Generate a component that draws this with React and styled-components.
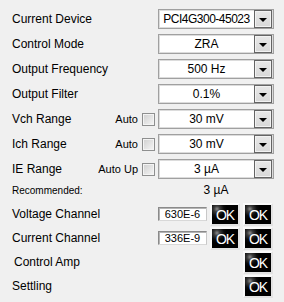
import React from "react";
import styled, { createGlobalStyle } from "styled-components";

const settings = [
  { label: "Current Device", value: "PCI4G300-45023", tight: true },
  { label: "Control Mode", value: "ZRA" },
  { label: "Output Frequency", value: "500 Hz" },
  { label: "Output Filter", value: "0.1%" },
  { label: "Vch Range", value: "30 mV", auto: "Auto" },
  { label: "Ich Range", value: "30 mV", auto: "Auto" },
  { label: "IE Range", value: "3 µA", auto: "Auto Up" },
];

const status = [
  { label: "Voltage Channel", reading: "630E-6", buttons: 2 },
  { label: "Current Channel", reading: "336E-9", buttons: 2 },
  { label: "Control Amp", buttons: 1, indent: true },
  { label: "Settling", buttons: 1 },
];

function DropArrow() {
  return (
    <svg width="8" height="4" viewBox="0 0 8 4">
      <polygon points="0,0 8,0 4,4" fill="#000" />
    </svg>
  );
}

function App() {
  return (
    <>
      <GlobalStyle />
      <Panel>
        <SettingsList>
          {settings.map((s) => (
            <Row key={s.label}>
              <Label>{s.label}</Label>
              {s.auto && (
                <AutoGroup>
                  {s.auto}
                  <Checkbox />
                </AutoGroup>
              )}
              <Select>
                <SelectValue tight={s.tight}>{s.value}</SelectValue>
                <ArrowButton>
                  <DropArrow />
                </ArrowButton>
              </Select>
            </Row>
          ))}
        </SettingsList>

        <RecommendedRow>
          <SmallLabel>Recommended:</SmallLabel>
          <Recommended>3 µA</Recommended>
        </RecommendedRow>

        <StatusList>
          {status.map((s) => (
            <StatusRow key={s.label}>
              <Label indent={s.indent}>{s.label}</Label>
              {s.reading && <Reading>{s.reading}</Reading>}
              <OkGroup>
                {Array.from({ length: s.buttons }).map((_, i) => (
                  <OkButton key={i}>OK</OkButton>
                ))}
              </OkGroup>
            </StatusRow>
          ))}
        </StatusList>
      </Panel>
    </>
  );
}

export default App;

const GlobalStyle = createGlobalStyle`
  body {
    margin: 0;
    background: #f0f0f0;
    font-family: "Liberation Sans", Arial, sans-serif;
    color: #000;
  }
`;

const Panel = styled.div`
  width: 284px;
  height: 302px;
  box-sizing: border-box;
  padding: 9px 10px 0 12px;
  display: flex;
  flex-direction: column;
`;

const SettingsList = styled.div`
  display: flex;
  flex-direction: column;
  gap: 5px;
`;

const Row = styled.div`
  display: flex;
  align-items: center;
  height: 20px;
`;

const Label = styled.div`
  flex: 1;
  font-size: 12px;
  white-space: nowrap;
  padding-left: ${(p) => (p.indent ? "2px" : "0")};
`;

const AutoGroup = styled.div`
  display: flex;
  align-items: center;
  gap: 4px;
  margin-right: 3px;
  font-size: 11px;
`;

const Checkbox = styled.span`
  width: 13px;
  height: 13px;
  box-sizing: border-box;
  border: 1px solid #8e8f8f;
  box-shadow: inset 0 0 0 1px #f4f4f4;
  background: linear-gradient(135deg, #cfcfcf, #f6f6f6);
  margin-top: 1px;
`;

const Select = styled.div`
  width: 116px;
  height: 20px;
  box-sizing: border-box;
  border: 1px solid #a0a0a0;
  box-shadow: inset 0 0 0 1px #dcdcdc;
  background: #fff;
  display: flex;
  align-items: center;
  padding-right: 1px;
`;

const SelectValue = styled.div`
  flex: 1;
  text-align: center;
  font-size: 12px;
  letter-spacing: ${(p) => (p.tight ? "-0.5px" : "0")};
  white-space: nowrap;
`;

const ArrowButton = styled.div`
  width: 18px;
  height: 18px;
  box-sizing: border-box;
  border: 1px solid #646464;
  box-shadow: inset 0 0 0 1px #f2f2f2;
  background: linear-gradient(#e8e8e8, #d8d8d8);
  display: flex;
  align-items: center;
  justify-content: center;
  padding-top: 2px;
`;

const RecommendedRow = styled.div`
  display: flex;
  align-items: center;
  height: 16px;
  margin-top: 3px;
`;

const SmallLabel = styled.div`
  flex: 1;
  font-size: 10px;
`;

const Recommended = styled.div`
  width: 116px;
  text-align: center;
  font-size: 12px;
`;

const StatusList = styled.div`
  display: flex;
  flex-direction: column;
  margin-top: 4px;
`;

const StatusRow = styled.div`
  display: flex;
  align-items: center;
  height: 24px;
`;

const Reading = styled.div`
  width: 49px;
  height: 14px;
  box-sizing: border-box;
  border: 1px solid #8a8a8a;
  border-right-color: #c8c8c8;
  border-bottom-color: #d8d8d8;
  box-shadow: inset 1px 1px 0 #b4b4b4;
  background: #fff;
  font-size: 11px;
  line-height: 12px;
  text-align: center;
  margin-right: 3px;
`;

const OkGroup = styled.div`
  display: flex;
  gap: 3px;
  padding-right: 1px;
`;

const OkButton = styled.div`
  width: 30px;
  height: 23px;
  box-sizing: border-box;
  border: 2px solid #fafafa;
  border-right-color: #e2e2e2;
  border-bottom-color: #e2e2e2;
  background: radial-gradient(circle at 5px 4px, #8a8a8a 0, #3a3a3a 3px, #0a0a0a 7px, #000 10px);
  color: #fff;
  font-size: 14px;
  letter-spacing: -1px;
  line-height: 19px;
  padding-top: 1px;
  text-align: center;
`;
